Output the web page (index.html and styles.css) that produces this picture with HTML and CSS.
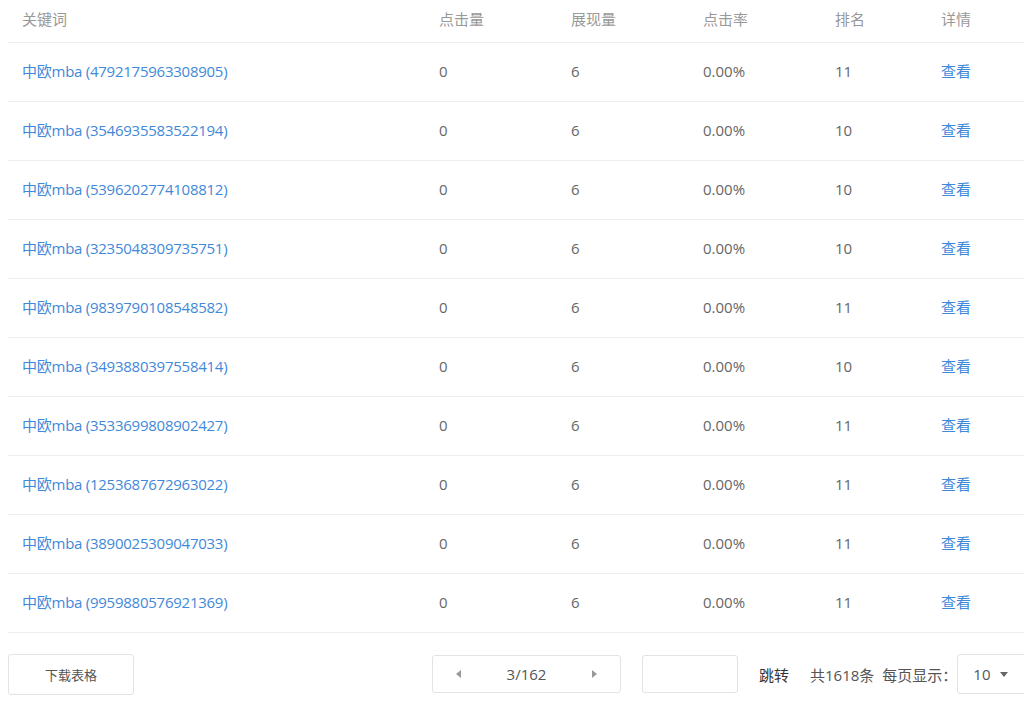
FILE: index.html
```html
<!DOCTYPE html>
<html lang="zh-CN">
<head>
<meta charset="utf-8">
<title>关键词</title>
<link rel="stylesheet" href="styles.css">
</head>
<body>
<div class="wrap">
  <table class="data">
    <colgroup>
      <col class="c1"><col class="c2"><col class="c3"><col class="c4"><col class="c5"><col class="c6">
    </colgroup>
    <thead>
      <tr><th>关键词</th><th>点击量</th><th>展现量</th><th>点击率</th><th>排名</th><th>详情</th></tr>
    </thead>
    <tbody>
      <tr><td><a class="link kw">中欧mba (4792175963308905)</a></td><td>0</td><td>6</td><td>0.00%</td><td>11</td><td><a class="link">查看</a></td></tr>
      <tr><td><a class="link kw">中欧mba (3546935583522194)</a></td><td>0</td><td>6</td><td>0.00%</td><td>10</td><td><a class="link">查看</a></td></tr>
      <tr><td><a class="link kw">中欧mba (5396202774108812)</a></td><td>0</td><td>6</td><td>0.00%</td><td>10</td><td><a class="link">查看</a></td></tr>
      <tr><td><a class="link kw">中欧mba (3235048309735751)</a></td><td>0</td><td>6</td><td>0.00%</td><td>10</td><td><a class="link">查看</a></td></tr>
      <tr><td><a class="link kw">中欧mba (9839790108548582)</a></td><td>0</td><td>6</td><td>0.00%</td><td>11</td><td><a class="link">查看</a></td></tr>
      <tr><td><a class="link kw">中欧mba (3493880397558414)</a></td><td>0</td><td>6</td><td>0.00%</td><td>10</td><td><a class="link">查看</a></td></tr>
      <tr><td><a class="link kw">中欧mba (3533699808902427)</a></td><td>0</td><td>6</td><td>0.00%</td><td>11</td><td><a class="link">查看</a></td></tr>
      <tr><td><a class="link kw">中欧mba (1253687672963022)</a></td><td>0</td><td>6</td><td>0.00%</td><td>11</td><td><a class="link">查看</a></td></tr>
      <tr><td><a class="link kw">中欧mba (3890025309047033)</a></td><td>0</td><td>6</td><td>0.00%</td><td>11</td><td><a class="link">查看</a></td></tr>
      <tr><td><a class="link kw">中欧mba (9959880576921369)</a></td><td>0</td><td>6</td><td>0.00%</td><td>11</td><td><a class="link">查看</a></td></tr>
    </tbody>
  </table>

  <div class="footer">
    <button class="btn-download">下载表格</button>
    <div class="pager-group">
      <div class="pager">
        <span class="tri tri-left"></span>
        <span class="page-num">3/162</span>
        <span class="tri tri-right"></span>
      </div>
      <div class="jump-input"></div>
      <span class="jump">跳转</span>
      <span class="total">共1618条</span>
      <span class="per">每页显示：</span>
      <div class="select"><span>10</span><span class="tri tri-down"></span></div>
    </div>
  </div>
</div>
</body>
</html>
```

FILE: styles.css
```css
html, body {
  margin: 0;
  padding: 0;
  background: #fff;
  overflow: hidden;
}
body {
  font-family: "Open Sans", "Noto Sans CJK SC", sans-serif;
  font-size: 15px;
  color: #666;
}
.wrap {
  width: 1032px;
  padding-left: 8px;
}
.data {
  width: 100%;
  border-collapse: collapse;
  table-layout: fixed;
}
.c1 { width: 417px; }
.c2, .c3, .c4 { width: 132px; }
.c5 { width: 106px; }
.data th {
  height: 42px;
  padding: 0 14px 3px 14px;
  text-align: left;
  font-weight: normal;
  color: #999;
  border-bottom: 1px solid #eee;
  vertical-align: middle;
  line-height: 20px;
  box-sizing: border-box;
}
.data td {
  height: 59px;
  padding: 0 14px 1px 14px;
  border-bottom: 1px solid #eee;
  vertical-align: middle;
  line-height: 20px;
  box-sizing: border-box;
  white-space: nowrap;
}
.link {
  color: #3f89da;
  text-decoration: none;
}
.kw {
  letter-spacing: -0.25px;
}
.footer {
  display: flex;
  align-items: center;
  margin-top: 21px;
  white-space: nowrap;
}
.btn-download {
  flex-shrink: 0;
  width: 126px;
  height: 41px;
  box-sizing: border-box;
  background: #fff;
  border: 1px solid #e3e3e3;
  border-radius: 3px;
  font-family: "Open Sans", "Noto Sans CJK SC", sans-serif;
  font-size: 13px;
  color: #555;
  padding: 0;
}
.pager-group {
  flex-shrink: 0;
  display: flex;
  align-items: center;
  margin-left: 298px;
}
.pager-group > * {
  flex-shrink: 0;
}
.pager {
  width: 189px;
  height: 38px;
  box-sizing: border-box;
  border: 1px solid #e3e3e3;
  border-radius: 3px;
  display: flex;
  align-items: center;
  justify-content: space-between;
  padding: 0 23px;
  color: #555;
}
.tri {
  display: inline-block;
  width: 0;
  height: 0;
}
.tri-left {
  border-top: 4px solid transparent;
  border-bottom: 4px solid transparent;
  border-right: 5px solid #999;
}
.tri-right {
  border-top: 4px solid transparent;
  border-bottom: 4px solid transparent;
  border-left: 5px solid #999;
}
.tri-down {
  border-left: 4px solid transparent;
  border-right: 4px solid transparent;
  border-top: 5px solid #666;
  margin-left: 9px;
}
.jump-input {
  width: 96px;
  height: 38px;
  box-sizing: border-box;
  border: 1px solid #e3e3e3;
  border-radius: 3px;
  margin-left: 21px;
}
.jump {
  margin-left: 21px;
  color: #333;
}
.total {
  margin-left: 21px;
  color: #555;
}
.per {
  margin-left: 8px;
  color: #555;
}
.select {
  margin-left: 0;
  width: 82px;
  height: 40px;
  box-sizing: border-box;
  border: 1px solid #e3e3e3;
  border-radius: 3px;
  display: flex;
  align-items: center;
  padding-left: 15px;
  color: #555;
}
```
